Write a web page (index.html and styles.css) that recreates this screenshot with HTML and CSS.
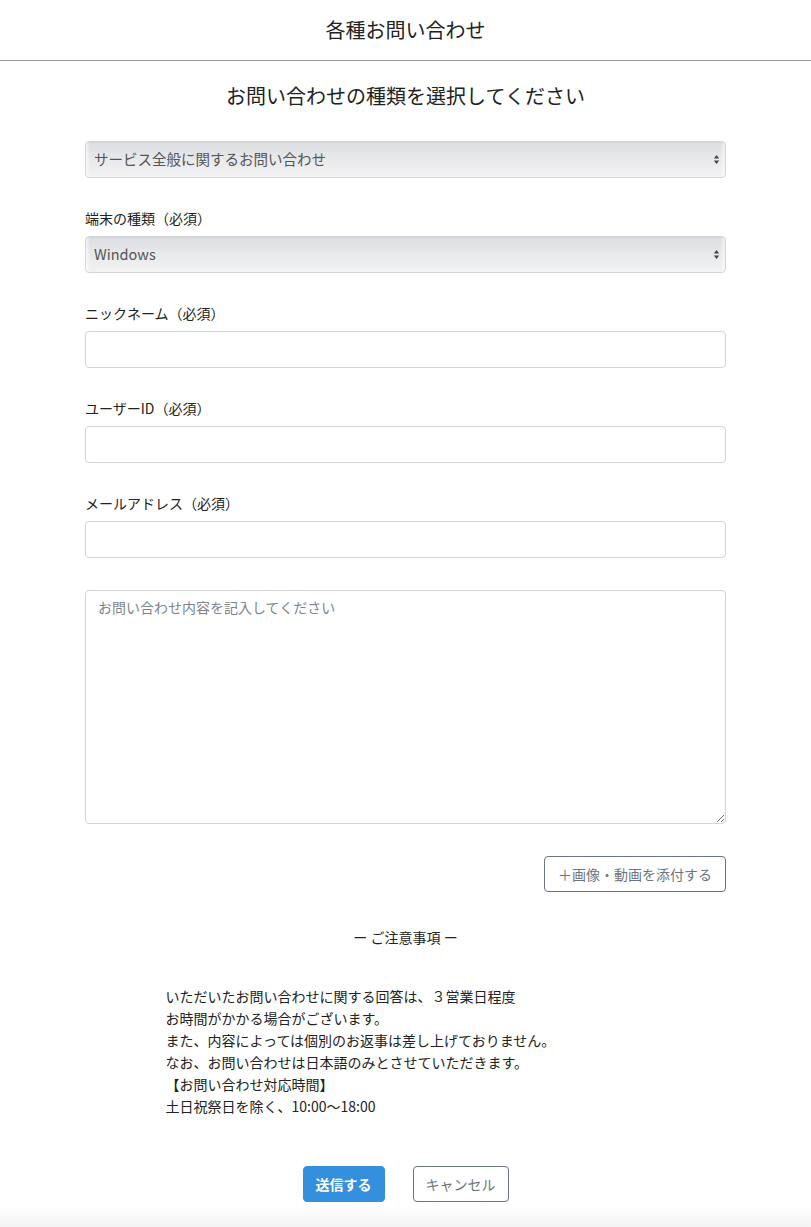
FILE: index.html
```html
<!DOCTYPE html>
<html lang="ja">
<head>
  <meta charset="UTF-8" />
  <meta name="viewport" content="width=device-width, initial-scale=1.0"/>
  <title>各種お問い合わせ</title>
  <link rel="stylesheet" href="styles.css">
</head>
<body>

  <header class="page-header">
    <h1>各種お問い合わせ</h1>
  </header>

  <main class="container">
    <h2 class="lead-title">お問い合わせの種類を選択してください</h2>

    <form class="contact-form" onsubmit="return false;">
      <div class="form-group">
        <select class="form-select">
          <option>サービス全般に関するお問い合わせ</option>
        </select>
      </div>

      <div class="form-group">
        <label for="device">端末の種類（必須）</label>
        <select id="device" class="form-select">
          <option>Windows</option>
        </select>
      </div>

      <div class="form-group">
        <label for="nickname">ニックネーム（必須）</label>
        <input type="text" id="nickname" class="form-control" />
      </div>

      <div class="form-group">
        <label for="userId">ユーザーID（必須）</label>
        <input type="text" id="userId" class="form-control" />
      </div>

      <div class="form-group">
        <label for="email">メールアドレス（必須）</label>
        <input type="email" id="email" class="form-control" />
      </div>

      <div class="form-group form-group-text">
        <textarea class="form-control message" placeholder="お問い合わせ内容を記入してください"></textarea>
      </div>

      <div class="attach-row">
        <button type="button" class="btn btn-outline">＋画像・動画を添付する</button>
      </div>

      <section class="notes">
        <h3>ー ご注意事項 ー</h3>
        <p>
          いただいたお問い合わせに関する回答は、３営業日程度<br>
          お時間がかかる場合がございます。<br>
          また、内容によっては個別のお返事は差し上げておりません。<br>
          なお、お問い合わせは日本語のみとさせていただきます。<br>
          【お問い合わせ対応時間】<br>
          土日祝祭日を除く、10:00〜18:00
        </p>
      </section>

      <div class="actions">
        <button type="submit" class="btn btn-primary">送信する</button>
        <button type="button" class="btn btn-outline">キャンセル</button>
      </div>
    </form>
  </main>

  <div class="page-foot"></div>

</body>
</html>
```

FILE: styles.css
```css
* { box-sizing: border-box; }
body {
  margin: 0;
  font-family: "Noto Sans CJK JP", "Noto Sans", sans-serif;
  color: #212529;
  background: #fff;
  font-size: 14px;
}
.page-header {
  height: 61px;
  border-bottom: 1px solid #999;
  display: flex;
  align-items: center;
  justify-content: center;
}
.page-header h1 {
  margin: 0;
  font-size: 20px;
  font-weight: 400;
  line-height: 30px;
  color: #222;
  padding-bottom: 1px;
}
.container {
  width: 641px;
  margin: 0 auto;
}
.lead-title {
  margin: 20px 0 30px;
  font-size: 20px;
  font-weight: 400;
  line-height: 30px;
  text-align: center;
  color: #222;
}
.form-group { margin-bottom: 29px; }
.form-group-text { margin-top: 32px; margin-bottom: 32px; }
label {
  display: block;
  line-height: 21px;
  padding-top: 1px;
  margin-bottom: 7px;
  color: #222;
}
.form-control, .form-select {
  display: block;
  width: 100%;
  height: 37px;
  font-family: inherit;
  font-size: 14px;
  color: #495057;
  border-radius: 4px;
}
.form-control {
  border: 1px solid #ced4da;
  background: #fff;
  padding: 6px 12px;
}
.form-select {
  appearance: none;
  -webkit-appearance: none;
  border: 1px solid #d3d5d9;
  padding: 0 24px 3px 8px;
  color: #555;
  font-size: 14.5px;
  background:
    url("data:image/svg+xml,%3Csvg xmlns='http://www.w3.org/2000/svg' width='8' height='12'%3E%3Cpath d='M4 1 7 5H1z M4 11 1 7h6z' fill='%23444'/%3E%3C/svg%3E") no-repeat right 5px center / 7px 11px,
    linear-gradient(to right, rgba(255,255,255,0.7) 0, rgba(255,255,255,0) 4px, rgba(255,255,255,0) calc(100% - 5px), rgba(255,255,255,0.6) 100%),
    linear-gradient(#dcdde0, #e8e9eb 50%, #f2f2f3);
  box-shadow: inset 0 1px 0 rgba(0,0,0,0.04);
}
.message {
  height: 234px;
  resize: vertical;
  padding: 6px 12px;
  line-height: 21px;
}
.message::placeholder { color: #7d848b; }
.attach-row {
  display: flex;
  justify-content: flex-end;
}
.btn {
  font-family: inherit;
  font-size: 14px;
  height: 36px;
  padding: 0 13px;
  border-radius: 4px;
  cursor: pointer;
  line-height: 34px;
}
.btn-outline {
  background: #fff;
  color: #6c757d;
  border: 1px solid #6c757d;
}
.btn-primary {
  background: #3490dc;
  color: #fff;
  border: 1px solid #3490dc;
  font-weight: 700;
  padding: 0 12px;
}
.notes h3 {
  margin: 35px 0 37px;
  font-size: 14px;
  font-weight: 400;
  line-height: 21px;
  text-align: center;
  color: #222;
}
.notes p {
  width: 480px;
  margin: 0 auto;
  line-height: 22px;
  color: #222;
}
.actions {
  display: flex;
  justify-content: center;
  gap: 28px;
  margin-top: 49px;
}
.actions .btn-outline { padding: 0 12px; }
.page-foot {
  height: 26px;
  background: linear-gradient(#fff 20%, #f3f3f3);
}
```
